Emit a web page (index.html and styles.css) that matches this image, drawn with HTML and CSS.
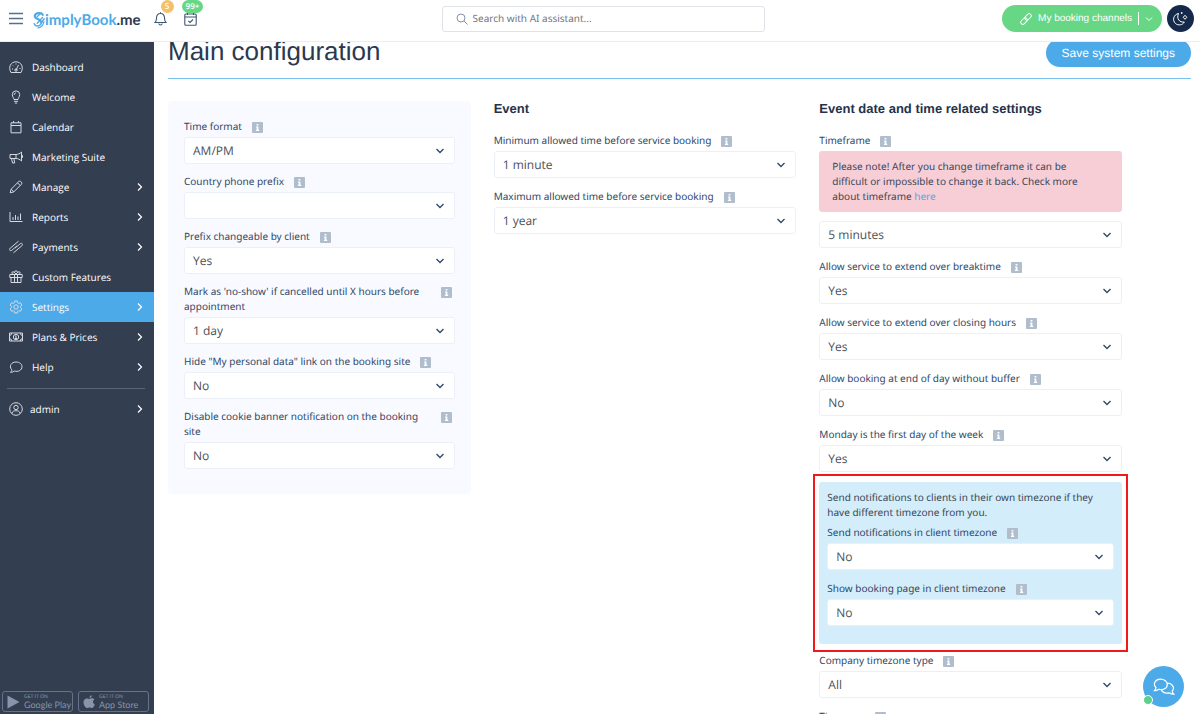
FILE: index.html
```html
<!DOCTYPE html>
<html lang="en">
<head>
<meta charset="utf-8">
<meta name="viewport" content="width=device-width, initial-scale=1">
<title>Main configuration</title>
<link rel="stylesheet" href="styles.css">
</head>
<body>
<svg class="sprite" aria-hidden="true">
  <symbol id="info" viewBox="0 0 11 11"><rect width="11" height="11" rx="1" fill="#afbdcc"/><path d="M4.6 2h1.8v1.5H4.6zM4 4.4h2.4v3.4h.8V9H3.9V7.800h.8V5.500H4z" fill="#fff"/></symbol>
  <symbol id="chev" viewBox="0 0 6 10"><path d="M1 1.500 4.500 5 1 8.500" fill="none" stroke="currentColor" stroke-width="1.200"/></symbol>
</svg>

<header class="topbar">
  <button class="plain menu-btn" aria-label="Menu"><svg width="14" height="13" viewBox="0 0 14 13"><path d="M0 1.500h14M0 6.500h14M0 11.500h14" stroke="#5a6f8c" stroke-width="1.300"/></svg></button>
  <a class="logo" href="#" aria-label="SimplyBook.me">
    <svg width="12" height="18" viewBox="0 0 12 18" fill="none" stroke="#4caae9" stroke-linecap="round"><path d="M9.800 3.800C8.500 1.300 2 1.200 1.800 5c0 3.300 6 2.800 6.300 6.200" stroke-width="2.200"/><path d="M1.200 12.800c1 2.700 5 3 6.400.6L11 8" stroke-width="1.500"/><path d="M4.200 12.200 9.500 6.500M4.300 5.500l4-3.500" stroke-width="1.300"/><path d="M5 16.800c3.500-.2 5-2.500 6-6" stroke-width="1.200"/></svg><span class="logo-name">implyBook</span><span class="logo-tld">.me</span>
  </a>
  <button class="plain alert-btn" aria-label="Notifications, 5"><svg width="13" height="14" viewBox="0 0 13 14" fill="none" stroke="#3f5675" stroke-width="1.100"><path d="M6.500.3v1.200M1 10.500c1.500-1.500 1.400-2.500 1.500-4.500.1-2.800 1.700-4.500 4-4.500s3.900 1.700 4 4.500c.1 2 0 3 1.500 4.500zM4.800 11.500c.3 2 3.100 2 3.400 0"/></svg><span class="badge badge-orange">5</span></button>
  <button class="plain tasks-btn" aria-label="Bookings, 99+"><svg width="13" height="14" viewBox="0 0 13 14" fill="none" stroke="#3f5675" stroke-width="1.100"><rect x=".8" y="2" width="11.400" height="11.200" rx="1"/><path d="M.8 5h11.400M3.500.5V3M9.500.5V3M4.300 8.800l1.700 1.700 3-3"/></svg><span class="badge badge-green">99+</span></button>
  <label class="search"><svg width="12" height="12" viewBox="0 0 12 12" fill="none" stroke="#8592a3"><circle cx="5" cy="5" r="4"/><path d="m8 8 3.500 3.500"/></svg><input type="text" placeholder="Search with AI assistant..." aria-label="Search with AI assistant"></label>
  <button class="channels"><svg width="12" height="12" viewBox="0 0 12 12" fill="none" stroke="#fff"><rect x="4.300" y="1.800" width="7.400" height="4.200" rx="2.100" transform="rotate(-45 8 3.900)"/><rect x=".3" y="6" width="7.400" height="4.200" rx="2.100" transform="rotate(-45 4 8.100)"/></svg><span>My booking channels</span><i class="split"></i><svg width="8" height="6" viewBox="0 0 8 6"><path d="m1 1.500 3 3 3-3" fill="none" stroke="#fff"/></svg></button>
  <button class="theme" aria-label="Dark mode"><svg width="17" height="17" viewBox="0 0 17 17" fill="none" stroke="#fff"><path d="M6.500 3.500C1.500 4.500 0 10.500 3.500 13.500c2.800 2.400 7.300 1.600 8.800-1.500-5 .8-8-3.500-5.800-8.500z"/><path d="m13 5.300 1.800 2-1.800 2-1.800-2z"/><path d="M9.700 2.200v1.600M8.900 3h1.600"/></svg></button>
</header>

<div class="app">
  <aside class="sidebar">
    <nav>
      <a href="#"><svg viewBox="0 0 14 14"><path d="M2 12.500C-1 7.500 1.500 1.800 7 1.800s8 5.700 5 10.700zM7 10l2.500-5M3 9h1M4 5.500l.7.700M7 3.500v1M10.500 8.500h1"/><circle cx="7" cy="10" r="1.200"/></svg>Dashboard</a>
      <a href="#"><svg viewBox="0 0 14 14"><path d="M5 9.500C5 7.800 3.300 7 3.300 4.600a3.700 3.700 0 0 1 7.400 0C10.700 7 9 7.800 9 9.500zM5 11.300h4M5.800 13h2.400M5.200 5c0-1.200.6-2 1.700-2"/></svg>Welcome</a>
      <a href="#"><svg viewBox="0 0 14 14"><path d="M2 2.800h10v10H2zM2 5.500h10M4.500 1v2M9.500 1v2"/></svg>Calendar</a>
      <a href="#"><svg viewBox="0 0 14 14"><path d="M1 4.500h6C9 4.500 11 3.500 12.500 2v9C11 9.500 9 8.500 7 8.500H1zM7 4.500v4M12.500 5.500h1v2h-1M2.500 8.500l1 4.500h2.200l-.8-4.500"/></svg>Marketing Suite</a>
      <a href="#"><svg viewBox="0 0 14 14"><path d="m1.200 12.800.9-3.600L9.800 1.500q1-.8 2 0l.7.700q.8 1 0 2L4.800 11.900zM8.500 2.800l2.700 2.700M2.100 9.200l2.700 2.700"/></svg>Manage<svg class="chev"><use href="#chev"/></svg></a>
      <a href="#"><svg viewBox="0 0 14 14"><path d="M1 2v9.500h12.500M4 7v3M6.500 5v5M9 6.500V10M11.500 3.500V10"/></svg>Reports<svg class="chev"><use href="#chev"/></svg></a>
      <a href="#"><svg viewBox="0 0 14 14"><path d="M9.500 1.200 1.200 8.200c-1.500 1.500 0 3.400 1.700 2l5-4.300M4.500 12.800l8.300-7c1.500-1.500 0-3.400-1.700-2l-5 4.300"/></svg>Payments<svg class="chev"><use href="#chev"/></svg></a>
      <a href="#"><svg viewBox="0 0 14 14"><path d="M.8 4.500h12.400v3H.8zM2 7.500h10v5H2zM5.500 4.500v8M8.500 4.500v8M7 4.500C6 1.500 2.500 1 2.800 3.200 3 4.200 5 4.500 7 4.500s4-.3 4.200-1.300C11.500 1 8 1.500 7 4.500zM5.500 2c0-1.500 3-1.500 3 0"/></svg>Custom Features</a>
      <a href="#" class="active"><svg viewBox="0 0 14 14"><path d="m5.700 1-.4 1.700-1.100.7-1.700-.6L1.200 5l1.200 1.300v1.400L1.200 9l1.300 2.200 1.700-.6 1.100.7.400 1.700h2.600l.4-1.700 1.100-.7 1.700.6L12.800 9l-1.200-1.300V6.300L12.800 5l-1.300-2.200-1.700.6-1.100-.7L8.300 1z"/><circle cx="7" cy="7" r="2.200"/></svg>Settings<svg class="chev"><use href="#chev"/></svg></a>
      <a href="#"><svg viewBox="0 0 14 14"><path d="M.5 3h13v8H.5zM.5 5.500Q2.500 5.500 2.800 3M.5 8.500q2 0 2.300 2.500M13.500 5.500q-2 0-2.300-2.500M13.500 8.500q-2 0-2.300 2.500M7 5.500v3M6.300 6H7M6 8.500h2"/><circle cx="7" cy="7" r="2.700"/></svg>Plans &amp; Prices<svg class="chev"><use href="#chev"/></svg></a>
      <a href="#"><svg viewBox="0 0 14 14"><path d="M2.800 9.800C-.5 6 2.500 2 7 2c3.500 0 6 2 6 4.700 0 3.600-4 5.500-7.500 4.300-1 .8-2.300 1.300-4 1.300 1-.8 1.300-1.600 1.300-2.500z"/></svg>Help<svg class="chev"><use href="#chev"/></svg></a>
    </nav>
    <hr>
    <a href="#" class="account"><svg viewBox="0 0 14 14"><circle cx="7" cy="7" r="6.300"/><circle cx="7" cy="5.500" r="2.200"/><path d="M3 11.500C3.200 9 5 8.800 7 8.800s3.800.2 4 2.700"/></svg>admin<svg class="chev"><use href="#chev"/></svg></a>
    <div class="stores">
      <a href="#"><svg width="13" height="14" viewBox="0 0 13 14"><path d="M.5.5v13L12.500 7z" fill="#8794a9"/></svg><span><small>GET IT ON</small>Google Play</span></a>
      <a href="#"><svg width="12" height="14" viewBox="0 0 12 14"><path d="M8.800.3C8.900 1.800 7.800 3 6.400 3.100 6.200 1.700 7.500.500 8.800.3zM6.300 4c.7 0 1.500-.7 2.700-.7 1 0 1.900.5 2.400 1.300-2 1.200-1.800 3.900.4 4.800-.5 1.400-1.600 3.600-2.900 3.600-.9 0-1.200-.5-2.300-.5s-1.400.5-2.300.5C2.500 13 .5 9.800.5 7.200c0-2.500 1.600-3.800 3.200-3.800 1 0 1.900.6 2.600.6z" fill="#8794a9"/></svg><span><small>GET IT ON</small>App Store</span></a>
    </div>
  </aside>

  <main>
    <div class="page-head">
      <h1>Main configuration</h1>
      <button class="save">Save system settings</button>
    </div>
    <div class="columns">
      <section class="panel">
        <div class="field"><div class="cap"><label for="f1">Time format</label><svg class="info"><use href="#info"/></svg></div><select id="f1"><option>AM/PM</option></select></div>
        <div class="field"><div class="cap"><label for="f2">Country phone prefix</label><svg class="info"><use href="#info"/></svg></div><select id="f2"><option></option></select></div>
        <div class="field"><div class="cap"><label for="f3">Prefix changeable by client</label><svg class="info"><use href="#info"/></svg></div><select id="f3"><option>Yes</option></select></div>
        <div class="field"><div class="cap"><label for="f4">Mark as 'no-show' if cancelled until X hours before appointment</label><svg class="info"><use href="#info"/></svg></div><select id="f4"><option>1 day</option></select></div>
        <div class="field"><div class="cap"><label for="f5">Hide "My personal data" link on the booking site</label><svg class="info"><use href="#info"/></svg></div><select id="f5"><option>No</option></select></div>
        <div class="field"><div class="cap"><label for="f6">Disable cookie banner notification on the booking site</label><svg class="info"><use href="#info"/></svg></div><select id="f6"><option>No</option></select></div>
      </section>
      <section>
        <h2>Event</h2>
        <div class="field"><div class="cap"><label for="f7">Minimum allowed time before service booking</label><svg class="info"><use href="#info"/></svg></div><select id="f7"><option>1 minute</option></select></div>
        <div class="field"><div class="cap"><label for="f8">Maximum allowed time before service booking</label><svg class="info"><use href="#info"/></svg></div><select id="f8"><option>1 year</option></select></div>
      </section>
      <section>
        <h2>Event date and time related settings</h2>
        <div class="field"><div class="cap"><label for="f9">Timeframe</label><svg class="info"><use href="#info"/></svg></div>
          <p class="warning">Please note! After you change timeframe it can be difficult or impossible to change it back. Check more about timeframe <a href="#">here</a></p>
          <select id="f9"><option>5 minutes</option></select></div>
        <div class="field"><div class="cap"><label for="f10">Allow service to extend over breaktime</label><svg class="info"><use href="#info"/></svg></div><select id="f10"><option>Yes</option></select></div>
        <div class="field"><div class="cap"><label for="f11">Allow service to extend over closing hours</label><svg class="info"><use href="#info"/></svg></div><select id="f11"><option>Yes</option></select></div>
        <div class="field"><div class="cap"><label for="f12">Allow booking at end of day without buffer</label><svg class="info"><use href="#info"/></svg></div><select id="f12"><option>No</option></select></div>
        <div class="field"><div class="cap"><label for="f13">Monday is the first day of the week</label><svg class="info"><use href="#info"/></svg></div><select id="f13"><option>Yes</option></select></div>
        <div class="highlight">
          <div class="timezone">
            <p>Send notifications to clients in their own timezone if they have different timezone from you.</p>
            <div class="field"><div class="cap"><label for="f14">Send notifications in client timezone</label><svg class="info"><use href="#info"/></svg></div><select id="f14"><option>No</option></select></div>
            <div class="field"><div class="cap"><label for="f15">Show booking page in client timezone</label><svg class="info"><use href="#info"/></svg></div><select id="f15"><option>No</option></select></div>
          </div>
        </div>
        <div class="field"><div class="cap"><label for="f16">Company timezone type</label><svg class="info"><use href="#info"/></svg></div><select id="f16"><option>All</option></select></div>
        <div class="field"><div class="cap"><label for="f17">Timezone</label><svg class="info"><use href="#info"/></svg></div><select id="f17"><option></option></select></div>
      </section>
    </div>
  </main>
</div>

<button class="chat" aria-label="Chat"><svg width="22" height="18" viewBox="0 0 22 18" fill="none" stroke="#fff" stroke-width="1.200"><path d="M3 9.500C-.5 6 2.300 1.200 7.500 1.200c4 0 6.800 2.300 6.800 5.300 0 4-4.300 6-8.300 4.700-1.300.9-2.700 1.400-4.500 1.400 1-1 1.500-2 1.500-3.100zM14.200 5.200c5 0 8 4.500 5 7.800 0 1.200.6 2.200 1.600 3.200-1.900 0-3.300-.5-4.600-1.400-2.700.8-5.600.1-7.200-1.800M8 11.500c.2.700.5 1 1 1.500"/></svg><i class="online"></i></button>
</body>
</html>
```
FILE: styles.css
```css
* { box-sizing: border-box; }
body {
  margin: 0;
  overflow: hidden;
  background: #fff;
  color: #3a4657;
  font: 10px/15px "Noto Sans", "Open Sans", sans-serif;
  text-rendering: geometricPrecision;
}
h1, h2, p { margin: 0; }
a { text-decoration: none; color: #4caae9; }
button, input, select { font: inherit; text-rendering: inherit; }
button { cursor: pointer; border: 0; padding: 0; }
.sprite { display: none; }
.plain { background: none; position: relative; display: flex; }

.topbar {
  position: fixed;
  inset: 0 0 auto 0;
  z-index: 2;
  height: 42px;
  padding: 0 6px 4px 9px;
  display: flex;
  align-items: center;
  background: #fff;
  border-bottom: 1px solid #e9ecf5;
}
.logo {
  display: flex;
  align-items: center;
  margin: 2px 13px 0 10px;
  font: 700 15px/20px Lato, sans-serif;
}
.logo-tld { color: #2c3a50; }
.alert-btn { margin-right: 17px; }
.badge {
  position: absolute;
  bottom: 13px;
  left: 7px;
  min-width: 13px;
  padding: 0 4px;
  border-radius: 7px;
  color: #fff;
  font: 600 8px/13px "Open Sans", sans-serif;
}
.badge-orange { background: #f5c069; }
.badge-green { left: -2px; background: #67d786; }
.search {
  width: 323px;
  height: 26px;
  margin: 0 auto 0 245px;
  padding: 0 13px;
  display: flex;
  align-items: center;
  gap: 5px;
  border: 1px solid #dfe3e8;
  border-radius: 3px;
}
.search input {
  flex: 1;
  min-width: 0;
  padding: 0;
  border: 0;
  outline: 0;
  background: none;
}
.search input::placeholder { color: #6f7782; opacity: 1; }
.channels {
  height: 27px;
  margin-right: 5px;
  padding: 0 9px 0 18px;
  display: flex;
  align-items: center;
  gap: 6px;
  border-radius: 14px;
  background: #67d786;
  color: #fff;
  font: 10px/15px "Liberation Sans", Arial, sans-serif;
}
.split { width: 1px; height: 13px; background: #fff; }
.theme {
  width: 27px;
  height: 27px;
  display: grid;
  place-items: center;
  border-radius: 50%;
  background: #152a4b;
}

.app { display: flex; height: 100vh; }
.sidebar {
  flex: 0 0 154px;
  padding-top: 52px;
  display: flex;
  flex-direction: column;
  background: #343e51;
}
.sidebar nav a, .account {
  height: 30px;
  padding: 0 11px 0 9px;
  display: flex;
  align-items: center;
  gap: 9px;
  color: #fff;
  font-family: "Open Sans", sans-serif;
  font-weight: 500;
}
.sidebar nav svg, .account svg {
  width: 14px;
  height: 14px;
  fill: none;
  stroke: #d5dae2;
  stroke-width: 1;
}
.sidebar .account { gap: 7px; }
.sidebar a .chev { width: 6px; height: 10px; margin-left: auto; color: #fff; }
.sidebar .active { background: #4caae9; }
.sidebar hr { margin: 6px 9px 5px 7px; border: 0; border-top: 1px solid #596375; }
.stores {
  margin-top: auto;
  padding: 0 5px 2px 2px;
  display: grid;
  grid-template-columns: 1fr 1fr;
  gap: 5px;
}
.stores a {
  height: 21px;
  padding-left: 4px;
  display: flex;
  align-items: center;
  gap: 4px;
  border: 1px solid #66728a;
  border-radius: 3px;
  color: #8794a9;
  font: 9px/9px Lato, sans-serif;
  white-space: nowrap;
}
.stores svg { flex: none; }
.stores small { display: block; font-size: 5px; line-height: 5px; }

main { flex: 1; min-width: 0; padding: 36px 9px 0 14px; overflow: hidden; }
.page-head {
  height: 43px;
  padding-top: 3px;
  display: flex;
  align-items: flex-start;
  justify-content: space-between;
  border-bottom: 1px solid #79c2ee;
}
h1 { color: #2b394e; font: 26px/24px "Liberation Sans", Arial, sans-serif; }
.save {
  height: 28px;
  padding: 0 16px;
  border-radius: 14px;
  background: #4caae9;
  color: #fff;
  font: 12px/28px "Liberation Sans", Arial, sans-serif;
}
.columns {
  padding: 22px 69px 0 0;
  display: grid;
  grid-template-columns: repeat(3, minmax(0, 1fr));
  gap: 23px;
  align-items: start;
}
h2 { margin-bottom: 16px; color: #25334a; font: 700 13px/16px "Liberation Sans", Arial, sans-serif; }
.field { margin-bottom: 11px; }
.panel { padding: 18px 16px 15px; border-radius: 4px; background: #f9faff; }
.panel .field { margin-bottom: 10px; }
.cap { margin-bottom: 3px; display: flex; color: #2f4766; }
.info { flex: none; width: 11px; height: 11px; margin: 3px 3px 0 10px; }
select {
  display: block;
  width: 100%;
  height: 27px;
  padding: 0 30px 0 8px;
  border: 1px solid #ebeff8;
  border-radius: 3px;
  appearance: none;
  color: #4b5057;
  font-family: "Open Sans", sans-serif;
  font-size: 12px;
  background: #fff url("data:image/svg+xml,%3Csvg xmlns='http://www.w3.org/2000/svg' width='10' height='6'%3E%3Cpath d='m1.500 1 3.500 3.500L8.500 1' fill='none' stroke='%232f4766' stroke-width='1.300'/%3E%3C/svg%3E") no-repeat right 9px center;
}
.warning { margin-bottom: 9px; padding: 8px 24px 8px 13px; border-radius: 3px; background: #f7ced6; }
.highlight { margin: -9px -6px 1px; padding: 6px 4px; border: 2px solid #f0191c; }
.timezone { padding: 8px 8px 7px; border-radius: 3px; background: #d3edfa; }
.timezone p { margin-bottom: 5px; }

.chat {
  position: fixed;
  right: 16px;
  bottom: 7px;
  width: 41px;
  height: 41px;
  display: grid;
  place-items: center;
  border-radius: 50%;
  background: #4caae9;
}
.online {
  position: absolute;
  left: 0;
  bottom: 2px;
  width: 10px;
  height: 10px;
  border: 1px solid #fff;
  border-radius: 50%;
  background: #5cd08c;
}
```
